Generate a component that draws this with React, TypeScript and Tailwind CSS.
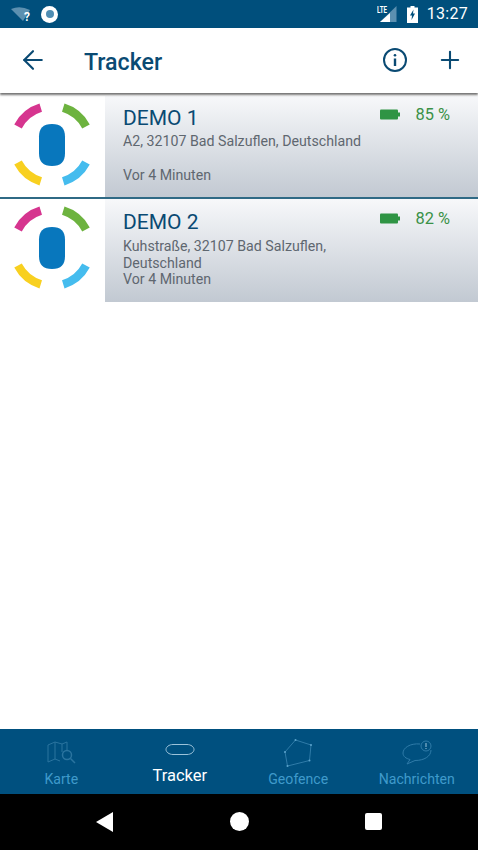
import React from "react";
import { ArrowLeft, Plus } from "lucide-react";

function arc(a1: number, a2: number) {
  const r = 38.5;
  const p = (a: number) => {
    const t = (a * Math.PI) / 180;
    return `${(52 + r * Math.cos(t)).toFixed(2)} ${(48.5 - r * Math.sin(t)).toFixed(2)}`;
  };
  return `M${p(a1)} A${r} ${r} 0 0 1 ${p(a2)}`;
}

const Logo = () => (
  <svg width="104" height="100" viewBox="0 0 104 100" fill="none">
    <path d={arc(152, 107)} stroke="#d6358f" strokeWidth="8.5" />
    <path d={arc(73, 28)} stroke="#6db33f" strokeWidth="8.5" />
    <path d={arc(-28, -73)} stroke="#45bcee" strokeWidth="8.5" />
    <path d={arc(-107, -152)} stroke="#f8d020" strokeWidth="8.5" />
    <path
      d="M52 28 C61 28 65 32.5 65 40.5 V57.5 C65 65.5 61 70 52 70 C43 70 39 65.5 39 57.5 V40.5 C39 32.5 43 28 52 28 Z"
      fill="#0877bd"
    />
  </svg>
);

const Battery = () => (
  <svg className="-translate-y-px" width="20" height="11" viewBox="0 0 20 11">
    <rect x="0" y="0.5" width="18" height="10" rx="1" fill="#2f9444" />
    <rect x="18" y="3.5" width="2" height="4" fill="#2f9444" />
  </svg>
);

const TrackerRow = ({
  name,
  percent,
  address,
  time,
  className,
  nameClass,
  addressClass,
  timeClass,
  statClass,
}: {
  name: string;
  percent: string;
  address: React.ReactNode;
  time: string;
  className: string;
  nameClass: string;
  addressClass: string;
  timeClass: string;
  statClass: string;
}) => (
  <div className={`flex ${className}`}>
    <div className="w-[105px] shrink-0 bg-white">
      <Logo />
    </div>
    <div className={`relative flex-1 bg-gradient-to-b from-[#f7f8fa] to-[#c2c9d2] pl-[18px] ${nameClass}`}>
      <div className="text-[21px] leading-[28px] text-[#0a4a73]">{name}</div>
      <div className={`w-[250px] text-[14.2px] leading-[17px] text-[#5f6770] ${addressClass}`}>{address}</div>
      <div className={`absolute left-[18px] text-[14.2px] leading-[18px] text-[#5f6770] ${timeClass}`}>{time}</div>
      <div className={`absolute right-[28px] flex items-center gap-[16px] text-[16.4px] leading-[20px] text-[#3a9147] ${statClass}`}>
        <Battery />
        <span>{percent}</span>
      </div>
    </div>
  </div>
);

const NavItem = ({
  label,
  active,
  icon,
}: {
  label: string;
  active?: boolean;
  icon: React.ReactNode;
}) => (
  <div className="flex flex-1 flex-col items-center">
    <div className="flex h-[40px] items-start justify-center">{icon}</div>
    <div
      className={
        active
          ? "mt-[-3px] text-[16.5px] leading-[20px] text-white"
          : "text-[14.1px] leading-[20px] text-[#3f9acb]"
      }
    >
      {label}
    </div>
  </div>
);

export default function App() {
  return (
    <div className="flex h-[850px] w-[478px] flex-col overflow-hidden bg-white font-['Roboto',sans-serif]">
      {/* status bar */}
      <div className="flex h-[28px] shrink-0 items-center bg-[#004f7c] pl-[11px] pr-[10px] text-white">
        <svg width="22" height="24" viewBox="0 0 22 24">
          <path d="M0 7 Q9 3 19 8 L12 19 Z" fill="#5c90b0" />
          <text x="13" y="19" fontSize="12" fontWeight="700" fill="#fff" fontFamily="Roboto, sans-serif">?</text>
        </svg>
        <div className="ml-[8px] flex h-[17px] w-[17px] items-center justify-center rounded-full bg-white">
          <div className="h-[8px] w-[8px] rounded-full bg-[#4f8db3]" />
        </div>
        <div className="flex-1" />
        <svg width="20" height="18" viewBox="0 0 20 18">
          <path d="M19.5 1 V17 H3 Z" fill="#5c90b0" />
          <path d="M13 8 V17 H3 Z" fill="#fff" />
          <text x="0" y="8" fontSize="9" fontWeight="700" fill="#fff" fontFamily="Roboto, sans-serif" textLength="10" lengthAdjust="spacingAndGlyphs">LTE</text>
        </svg>
        <svg className="ml-[10px]" width="11" height="17" viewBox="0 0 11 17">
          <path d="M3.5 0 H7.5 V1.5 H11 V17 H0 V1.5 H3.5 Z" fill="#fff" />
          <path d="M6.5 3.5 L3 9.5 H5 L4.5 14 L8 7.5 H6 Z" fill="#004f7c" />
        </svg>
        <span className="ml-[9px] text-[16px] tracking-[0.3px]">13:27</span>
      </div>

      {/* toolbar */}
      <header className="relative z-10 flex h-[65px] shrink-0 items-center bg-white pl-[18px] pr-[14px] text-[#0a4a73] shadow-[0_2px_2px_rgba(0,0,0,0.55)]">
        <ArrowLeft className="-translate-y-px" size={30} strokeWidth={1.7} />
        <h1 className="ml-[36px] flex-1 translate-y-[2px] text-[23.2px] font-medium">Tracker</h1>
        <svg className="-translate-y-px" width="24" height="24" viewBox="0 0 24 24" fill="none" stroke="currentColor" strokeWidth="2">
          <circle cx="12" cy="12" r="11" />
          <circle cx="12" cy="7.2" r="1.3" fill="currentColor" stroke="none" />
          <path d="M12 10.5 V18" strokeWidth="2.4" />
        </svg>
        <Plus className="ml-[29px] -translate-y-px" size={28} strokeWidth={1.8} />
      </header>

      {/* list */}
      <main className="flex-1 pt-[3px]">
        <TrackerRow
          name="DEMO 1"
          percent="85 %"
          address="A2, 32107 Bad Salzuflen, Deutschland"
          time="Vor 4 Minuten"
          className="h-[103px] border-b-2 border-[#2f6a85]"
          nameClass="pt-[8px]"
          addressClass="mt-[1px]"
          timeClass="bottom-[13px]"
          statClass="top-[9px]"
        />
        <TrackerRow
          name="DEMO 2"
          percent="82 %"
          address="Kuhstraße, 32107 Bad Salzuflen, Deutschland"
          time="Vor 4 Minuten"
          className="h-[103px]"
          nameClass="pt-[9px]"
          addressClass="mt-[2px]"
          timeClass="bottom-[14px]"
          statClass="top-[10px]"
        />
      </main>

      {/* bottom nav */}
      <nav className="flex h-[65px] shrink-0 bg-[#00507f] px-[2px]">
        <NavItem
          label="Karte"
          icon={
            <svg className="mt-[12px]" width="29" height="23" viewBox="0 0 29 23" fill="none" stroke="#2a749f" strokeWidth="1">
              <path d="M1 4 L8 1 L15 3 L20 1 V9 M1 4 V21 L8 18 L13 20 M8 1 V18 M15 3 V11" />
              <circle cx="20" cy="14" r="4.5" strokeWidth="1.5" />
              <path d="M23.5 17.5 L28 22" strokeWidth="1.5" />
            </svg>
          }
        />
        <NavItem
          active
          label="Tracker"
          icon={
            <svg className="mt-[14px]" width="30" height="13" viewBox="0 0 30 13" fill="none" stroke="#9cc3da" strokeWidth="1">
              <path d="M8 1.5 H22 C26 1.5 29 4 29 6.5 C29 9 26 11.5 22 11.5 H8 C4 11.5 1 9 1 6.5 C1 4 4 1.5 8 1.5 Z" />
            </svg>
          }
        />
        <NavItem
          label="Geofence"
          icon={
            <svg className="mt-[10px]" width="29" height="28" viewBox="0 0 29 28" fill="#5ba3cc" stroke="#2f7ba8" strokeWidth="1">
              <path d="M11.5 1 L27 6 L25.5 21.5 L3.5 27 L1 13 Z" fill="none" />
              <g stroke="none">
                <circle cx="11.5" cy="1" r="1" />
                <circle cx="27" cy="6" r="1" />
                <circle cx="25.5" cy="21.5" r="1" />
                <circle cx="3.5" cy="27" r="1" />
                <circle cx="1" cy="13" r="1" />
              </g>
            </svg>
          }
        />
        <NavItem
          label="Nachrichten"
          icon={
            <svg className="mt-[11px]" width="30" height="25" viewBox="0 0 30 25" fill="none" stroke="#2f7ba8" strokeWidth="1">
              <path d="M18 4 C8 3 1 8 1 13 C1 16.5 4 18.5 8 19.5 L5 24 L13 20.5 C22 20.5 29 16.5 29 10" />
              <circle cx="24" cy="6" r="5" />
              <path d="M24 3 V7 M24 8 V9" stroke="#9cc3da" />
            </svg>
          }
        />
      </nav>

      {/* android buttons */}
      <div className="relative flex h-[56px] shrink-0 items-center bg-black">
        <svg className="absolute left-[96px] top-[18px]" width="17" height="20" viewBox="0 0 17 20">
          <path d="M17 0 V20 L0 10 Z" fill="#fff" />
        </svg>
        <div className="absolute left-[230px] top-[18px] h-[19px] w-[19px] rounded-full bg-white" />
        <div className="absolute left-[365px] top-[19px] h-[17px] w-[17px] rounded-[2px] bg-white" />
      </div>
    </div>
  );
}
